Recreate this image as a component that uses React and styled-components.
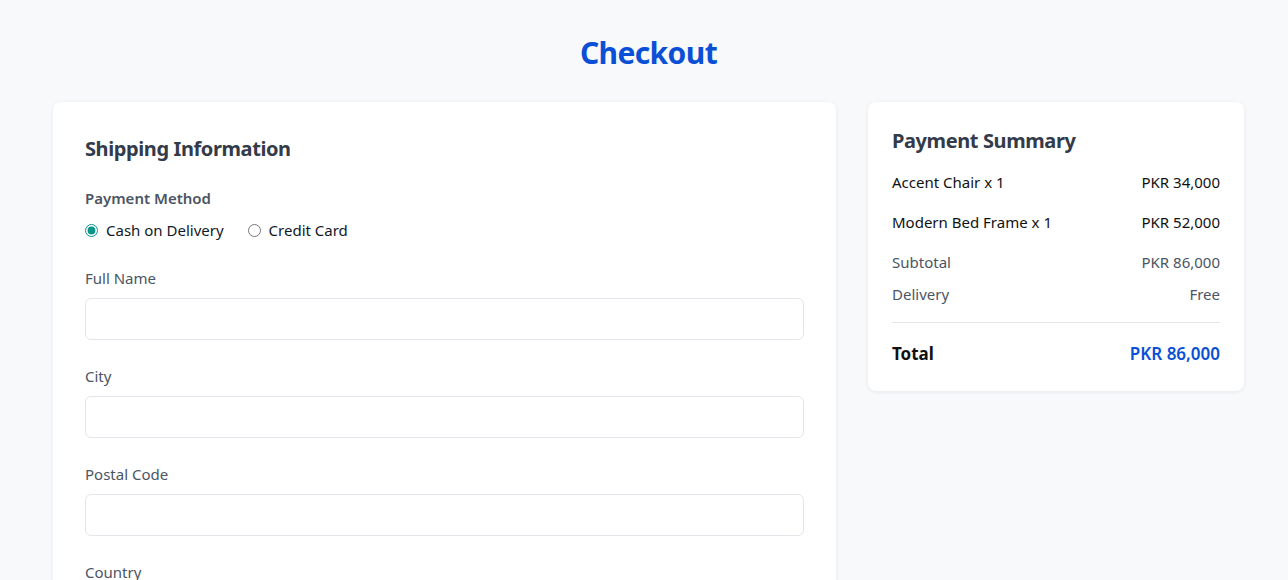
import React, { useState } from "react";
import styled, { createGlobalStyle } from "styled-components";

const Global = createGlobalStyle`
  html, body { margin: 0; padding: 0; background: #f8f9fb; }
  body { font-family: "Noto Sans", "Open Sans", sans-serif; }
  * { box-sizing: border-box; }
`;

const Page = styled.div`
  padding: 35px 44px 40px 53px;
`;

const Title = styled.h1`
  margin: 0 0 31px;
  text-align: center;
  font-size: 30px;
  line-height: 36px;
  font-weight: 700;
  letter-spacing: -0.6px;
  color: #0a50d6;
`;

const Layout = styled.div`
  display: flex;
  align-items: flex-start;
  gap: 32px;
`;

const Card = styled.section`
  background: #fff;
  border-radius: 8px;
  box-shadow: 0 1px 4px rgba(16, 24, 40, 0.08);
  padding: ${(p) => p.$pad}px;
  flex: ${(p) => p.$flex};
  min-width: 0;
`;

const CardTitle = styled.h2`
  margin: 0 0 ${(p) => p.$mb}px;
  font-size: 20px;
  line-height: 30px;
  font-weight: 700;
  letter-spacing: -0.4px;
  color: #333b4a;
`;

const GroupLabel = styled.div`
  font-size: 15px;
  line-height: 24px;
  font-weight: 600;
  color: #4b5563;
  margin-bottom: 8px;
`;

const RadioRow = styled.div`
  display: flex;
  gap: 24px;
  margin-bottom: 24px;
`;

const RadioOption = styled.label`
  display: flex;
  align-items: center;
  gap: 8px;
  font-size: 15px;
  line-height: 24px;
  color: #111827;
  cursor: pointer;

  input {
    margin: 0;
    width: 13px;
    height: 13px;
    accent-color: #0d9488;
  }
`;

const Field = styled.div`
  margin-bottom: 24px;
`;

const Label = styled.label`
  display: block;
  font-size: 15px;
  line-height: 24px;
  color: #4b5563;
  margin-bottom: 8px;
`;

const Input = styled.input`
  display: block;
  width: 100%;
  height: 42px;
  border: 1px solid #e3e5ea;
  border-radius: 6px;
  padding: 0 12px;
  font: inherit;
  font-size: 15px;
  background: #fff;
  outline: none;
`;

const Row = styled.div`
  display: flex;
  justify-content: space-between;
  align-items: center;
  height: ${(p) => p.$h}px;
  font-size: ${(p) => (p.$total ? 17 : 15)}px;
  font-weight: ${(p) => (p.$total ? 700 : 400)};
  color: ${(p) => (p.$muted ? "#4b5563" : "#111")};
`;

const Value = styled.span`
  color: ${(p) => (p.$accent ? "#0a50d6" : "inherit")};
  font-weight: ${(p) => (p.$accent ? 600 : "inherit")};
`;

const Divider = styled.hr`
  border: 0;
  border-top: 1px solid #e5e7eb;
  margin: 16px 0 16px;
`;

const Button = styled.button`
  width: 100%;
  height: 46px;
  border: 0;
  border-radius: 6px;
  background: #0a50d6;
  color: #fff;
  font: inherit;
  font-weight: 600;
  font-size: 16px;
`;

const fields = ["Full Name", "City", "Postal Code", "Country", "Address", "Phone Number"];

export default function App() {
  const [method, setMethod] = useState("cod");
  return (
    <>
      <Global />
      <Page>
        <Title>Checkout</Title>
        <Layout>
          <Card $pad={32} $flex="0 0 783px">
            <CardTitle $mb={22}>Shipping Information</CardTitle>
            <GroupLabel>Payment Method</GroupLabel>
            <RadioRow>
              <RadioOption>
                <input
                  type="radio"
                  name="pm"
                  checked={method === "cod"}
                  onChange={() => setMethod("cod")}
                />
                Cash on Delivery
              </RadioOption>
              <RadioOption>
                <input
                  type="radio"
                  name="pm"
                  checked={method === "card"}
                  onChange={() => setMethod("card")}
                />
                Credit Card
              </RadioOption>
            </RadioRow>
            {fields.map((f) => (
              <Field key={f}>
                <Label>{f}</Label>
                <Input type="text" />
              </Field>
            ))}
            <Button>Place Order</Button>
          </Card>
          <Card $pad={24} $flex="1 1 auto">
            <CardTitle $mb={6}>Payment Summary</CardTitle>
            <Row $h={40}>
              <span>Accent Chair x 1</span>
              <Value>PKR 34,000</Value>
            </Row>
            <Row $h={40}>
              <span>Modern Bed Frame x 1</span>
              <Value>PKR 52,000</Value>
            </Row>
            <Row $h={40} $muted>
              <span>Subtotal</span>
              <Value>PKR 86,000</Value>
            </Row>
            <Row $h={24} $muted>
              <span>Delivery</span>
              <Value>Free</Value>
            </Row>
            <Divider />
            <Row $h={28} $total>
              <span>Total</span>
              <Value $accent>PKR 86,000</Value>
            </Row>
          </Card>
        </Layout>
      </Page>
    </>
  );
}
